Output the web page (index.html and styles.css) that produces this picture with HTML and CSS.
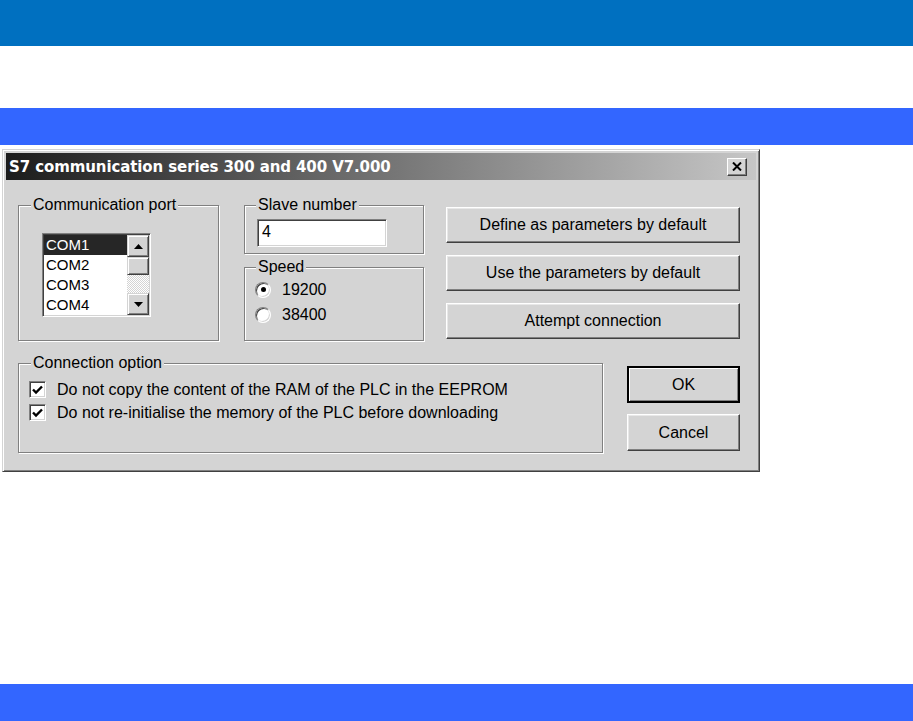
FILE: index.html
```html
<!DOCTYPE html>
<html lang="en">
<head>
  <meta charset="UTF-8">
  <title>S7 communication series 300 and 400</title>
  <link rel="stylesheet" href="styles.css">
</head>
<body>
<div class="band band-top"></div>
<div class="band band-mid"></div>

<div class="dialog">
  <div class="titlebar">
    <span class="title">S7 communication series 300 and 400 V7.000</span>
    <div class="close">
      <svg width="10" height="9" viewBox="0 0 10 9"><path d="M1 0.5 L9 8.5 M9 0.5 L1 8.5" stroke="#000" stroke-width="2"/></svg>
    </div>
  </div>

  <div class="dialog-body">
    <div class="row-top">
      <fieldset class="group group-port">
        <legend>Communication port</legend>
        <div class="listbox">
          <ul class="items">
            <li class="selected">COM1</li>
            <li>COM2</li>
            <li>COM3</li>
            <li>COM4</li>
          </ul>
          <div class="scrollbar">
            <div class="sb-btn">
              <svg width="9" height="5" viewBox="0 0 9 5"><polygon points="4.5,0 9,5 0,5" fill="#000"/></svg>
            </div>
            <div class="sb-thumb"></div>
            <div class="sb-track"></div>
            <div class="sb-btn">
              <svg width="9" height="5" viewBox="0 0 9 5"><polygon points="0,0 9,0 4.5,5" fill="#000"/></svg>
            </div>
          </div>
        </div>
      </fieldset>

      <div class="col-mid">
        <fieldset class="group group-slave">
          <legend>Slave number</legend>
          <div class="textbox">4</div>
        </fieldset>
        <fieldset class="group group-speed">
          <legend>Speed</legend>
          <div class="radio-row"><span class="radio checked"></span>19200</div>
          <div class="radio-row"><span class="radio"></span>38400</div>
        </fieldset>
      </div>

      <div class="col-btns">
        <div class="btn">Define as parameters by default</div>
        <div class="btn">Use the parameters by default</div>
        <div class="btn">Attempt connection</div>
      </div>
    </div>

    <div class="row-bottom">
      <fieldset class="group group-options">
        <legend>Connection option</legend>
        <div class="check-row">
          <span class="checkbox"><svg width="11" height="10" viewBox="0 0 11 10"><path d="M1 4.5 L4 7.5 L10 1.5" fill="none" stroke="#000" stroke-width="2.4"/></svg></span>
          Do not copy the content of the RAM of the PLC in the EEPROM
        </div>
        <div class="check-row">
          <span class="checkbox"><svg width="11" height="10" viewBox="0 0 11 10"><path d="M1 4.5 L4 7.5 L10 1.5" fill="none" stroke="#000" stroke-width="2.4"/></svg></span>
          Do not re-initialise the memory of the PLC before downloading
        </div>
      </fieldset>

      <div class="col-ok">
        <div class="btn btn-default">OK</div>
        <div class="btn">Cancel</div>
      </div>
    </div>
  </div>
</div>

<div class="band band-bottom"></div>
</body>
</html>
```

FILE: styles.css
```css
body {
  margin: 0;
  height: 100vh;
  display: flex;
  flex-direction: column;
  background: #fff;
  font-family: 'Liberation Sans', Arial, sans-serif;
  font-size: 16px;
  color: #000;
}
.band {
  flex: none;
  height: 37px;
}
.band-top {
  height: 46px;
  background: #0070c0;
}
.band-mid {
  margin-top: 62px;
  background: #3366ff;
}
.band-bottom {
  margin-top: auto;
  background: #3366ff;
}

/* dialog window */
.dialog {
  flex: none;
  box-sizing: border-box;
  width: 758px;
  height: 323px;
  margin: 4px 0 0 2px;
  padding: 3px;
  background: #d4d4d4;
  border: 1px solid;
  border-color: #d4d4d4 #404040 #404040 #d4d4d4;
  box-shadow: inset 1px 1px #fff, inset -1px -1px #808080;
}
.titlebar {
  height: 27px;
  display: flex;
  align-items: center;
  justify-content: space-between;
  padding: 0 3px;
  background: linear-gradient(90deg, #1c1c1c 0%, #5a5a5a 35%, #c6c6c6 100%);
}
.title {
  color: #fff;
  font-family: 'DejaVu Sans', sans-serif;
  font-weight: bold;
  font-size: 15px;
  letter-spacing: -0.1px;
}
.close {
  box-sizing: border-box;
  width: 20px;
  height: 18px;
  margin-right: 6px;
  display: flex;
  align-items: center;
  justify-content: center;
  background: #d4d4d4;
  border: 1px solid;
  border-color: #fff #404040 #404040 #fff;
  box-shadow: inset -1px -1px #808080;
}

.dialog-body {
  padding: 16px 0 0 12px;
}
.row-top {
  display: flex;
  align-items: flex-start;
}
.row-bottom {
  display: flex;
  align-items: flex-start;
  margin-top: 13px;
}

/* etched group boxes */
.group {
  box-sizing: border-box;
  margin: 0;
  padding: 0 0 0 10px;
  min-width: 0;
  border: 1px solid #808080;
  box-shadow: inset 1px 1px #fff, 1px 1px #fff;
}
.group legend {
  padding: 0 2px;
  margin-left: 2px;
  line-height: 18px;
  background: #d4d4d4;
}
.group-port {
  width: 201px;
  height: 145px;
}
.col-mid {
  width: 180px;
  margin-left: 25px;
  display: flex;
  flex-direction: column;
  gap: 4px;
}
.group-slave {
  height: 58px;
}
.group-slave legend {
  margin-left: 1px;
}
.group-speed {
  height: 83px;
}
.group-speed legend {
  margin-left: 1px;
}
.col-btns {
  width: 294px;
  margin-left: 22px;
  padding-top: 11px;
  display: flex;
  flex-direction: column;
  gap: 12px;
}
.group-options {
  width: 585px;
  height: 99px;
}
.col-ok {
  width: 113px;
  margin-left: 24px;
  padding-top: 12px;
  display: flex;
  flex-direction: column;
  gap: 11px;
}

/* buttons */
.btn {
  box-sizing: border-box;
  height: 36px;
  display: flex;
  align-items: center;
  justify-content: center;
  border: 1px solid;
  border-color: #fff #404040 #404040 #fff;
  box-shadow: inset -1px -1px #808080, inset 1px 1px #e8e8e8;
}
.col-ok .btn {
  height: 37px;
}
.btn-default {
  border: 2px solid #000;
  box-shadow: inset 1px 1px #fff, inset -1px -1px #808080;
}

/* list box */
.listbox {
  box-sizing: border-box;
  width: 109px;
  height: 84px;
  margin: 19px 0 0 13px;
  display: flex;
  background: #fff;
  border: 1px solid;
  border-color: #808080 #fff #fff #808080;
  box-shadow: inset 1px 1px #404040, inset -1px -1px #d4d4d4;
  padding: 1px;
}
.items {
  flex: 1;
  margin: 0;
  padding: 0;
  list-style: none;
  font-size: 15px;
}
.items li {
  height: 20px;
  line-height: 20px;
  padding-left: 2px;
}
.items .selected {
  background: #262626;
  color: #fff;
}
.scrollbar {
  width: 22px;
  display: flex;
  flex-direction: column;
}
.sb-btn,
.sb-thumb {
  box-sizing: border-box;
  display: flex;
  align-items: center;
  justify-content: center;
  background: #d4d4d4;
  border: 1px solid;
  border-color: #d4d4d4 #404040 #404040 #d4d4d4;
  box-shadow: inset 1px 1px #fff, inset -1px -1px #808080;
}
.sb-btn {
  height: 22px;
}
.sb-thumb {
  height: 18px;
}
.sb-track {
  height: 18px;
  background: repeating-conic-gradient(#fff 0 25%, #d4d4d4 0 50%) 0 0 / 2px 2px;
}

/* text box */
.textbox {
  box-sizing: border-box;
  width: 130px;
  height: 28px;
  margin: 5px 0 0 2px;
  padding-left: 4px;
  line-height: 24px;
  background: #fff;
  border: 1px solid;
  border-color: #808080 #fff #fff #808080;
  box-shadow: inset 1px 1px #404040, inset -1px -1px #d4d4d4;
}

/* radios and checkboxes */
.radio-row {
  height: 25px;
  display: flex;
  align-items: center;
}
.radio-row:first-of-type {
  margin-top: 1px;
}
.radio {
  box-sizing: border-box;
  width: 16px;
  height: 16px;
  margin-right: 11px;
  border-radius: 50%;
  background: #fff;
  border: 1px solid;
  border-color: #808080 #fff #fff #808080;
  box-shadow: inset 1px 1px #404040, inset -1px -1px #d4d4d4;
  display: flex;
  align-items: center;
  justify-content: center;
}
.radio.checked::after {
  content: "";
  width: 5px;
  height: 5px;
  border-radius: 50%;
  background: #000;
}
.check-row {
  height: 23px;
  display: flex;
  align-items: center;
}
.check-row:first-of-type {
  margin-top: 6px;
}
.checkbox {
  box-sizing: border-box;
  width: 17px;
  height: 17px;
  margin-right: 11px;
  background: #fff;
  border: 1px solid;
  border-color: #808080 #fff #fff #808080;
  box-shadow: inset 1px 1px #404040, inset -1px -1px #d4d4d4;
  display: flex;
  align-items: center;
  justify-content: center;
}
```
